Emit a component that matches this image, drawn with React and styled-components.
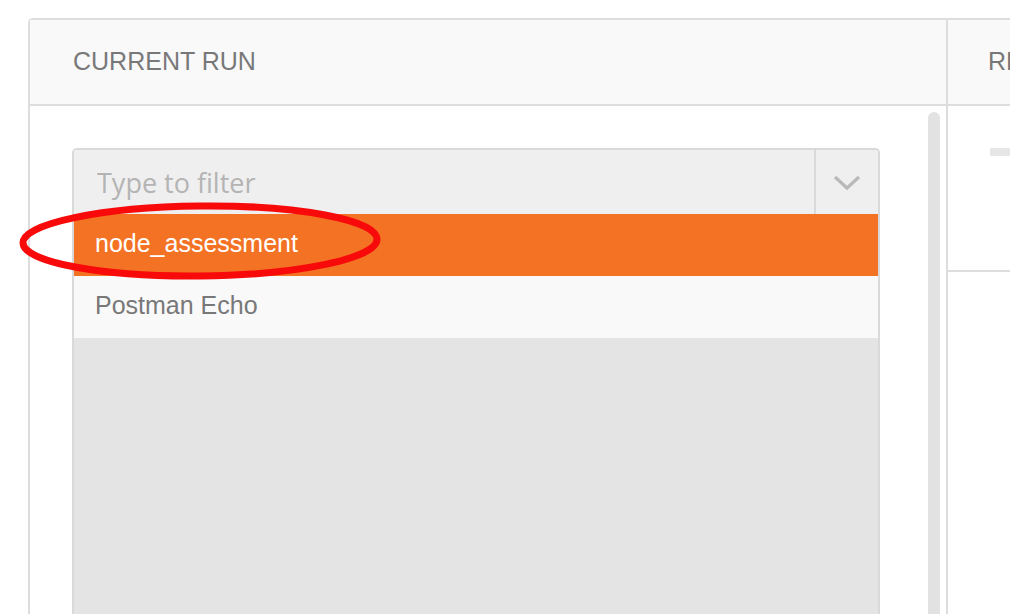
import React from "react";
import styled, { createGlobalStyle } from "styled-components";

const GlobalStyle = createGlobalStyle`
  html, body { margin: 0; padding: 0; background: #ffffff; }
  body { font-family: "Liberation Sans", Arial, sans-serif; overflow: hidden; }
  * { box-sizing: border-box; }
`;

const Page = styled.div`
  position: relative;
  width: 1010px;
  height: 614px;
  overflow: hidden;
  padding: 18px 0 0 28px;
`;

const Board = styled.div`
  display: flex;
  width: 1300px;
  height: 640px;
  border-top: 2px solid #dddddd;
  border-left: 2px solid #dddddd;
  border-top-left-radius: 5px;
`;

const Panel = styled.section`
  display: flex;
  flex-direction: column;
  flex: 0 0 ${(p) => p.$width}px;
  border-right: 2px solid #dddddd;
`;

const PanelHeader = styled.header`
  height: 86px;
  display: flex;
  align-items: center;
  padding-left: ${(p) => p.$indent}px;
  padding-bottom: 2px;
  background: #f9f9f9;
  border-bottom: 2px solid #dddddd;
  font-size: 25px;
  color: #787878;
  white-space: nowrap;
`;

const LeftBody = styled.div`
  flex: 1;
  display: grid;
  grid-template-columns: 808px 1fr;
  padding-left: 42px;
  min-height: 0;
`;

const Dropdown = styled.div`
  margin-top: 42px;
  display: flex;
  flex-direction: column;
  border: 2px solid #d9d9d9;
  border-bottom: none;
  border-radius: 5px 5px 0 0;
  overflow: hidden;
`;

const InputRow = styled.div`
  display: flex;
  height: 64px;
  background: #efefef;
`;

const FilterInput = styled.input`
  flex: 1;
  min-width: 0;
  border: none;
  outline: none;
  background: transparent;
  padding: 0 0 0 23px;
  font-family: "Open Sans", sans-serif;
  font-size: 27px;
  color: #555;
  &::placeholder { color: #b4b4b4; }
`;

const ToggleButton = styled.div`
  flex: 0 0 64px;
  display: flex;
  align-items: center;
  justify-content: center;
  border-left: 2px solid #d9d9d9;
  padding-top: 1px;
`;

const Option = styled.div`
  height: 62px;
  display: flex;
  align-items: center;
  padding: 0 0 3px 21px;
  font-size: 25px;
  background: ${(p) => (p.$active ? "#f37224" : "#f9f9f9")};
  color: ${(p) => (p.$active ? "#ffffff" : "#787878")};
`;

const EmptyArea = styled.div`
  flex: 1;
  background: #e4e4e4;
`;

const ScrollTrack = styled.div`
  justify-self: end;
  width: 12px;
  margin: 6px 6px 0 0;
  background: #e2e2e2;
  border-radius: 6px 6px 0 0;
`;

const RightBody = styled.div`
  display: flex;
  flex-direction: column;
`;

const RunItem = styled.div`
  height: 166px;
  padding: 42px 0 0 42px;
  border-bottom: 2px solid #dddddd;
`;

const SkeletonLine = styled.div`
  width: 120px;
  height: 8px;
  background: #e6e6e6;
`;

const Annotation = styled.svg`
  position: absolute;
  left: 0;
  top: 0;
  pointer-events: none;
`;

function Chevron() {
  return (
    <svg width="28" height="16" viewBox="0 0 28 16">
      <path d="M2 2 L14 13 L26 2" fill="none" stroke="#b9b9b9" strokeWidth="3.2" />
    </svg>
  );
}

export default function App() {
  const options = [
    { name: "node_assessment", active: true },
    { name: "Postman Echo", active: false },
  ];
  return (
    <>
      <GlobalStyle />
      <Page>
        <Board>
          <Panel $width={918}>
            <PanelHeader $indent={43}>CURRENT RUN</PanelHeader>
            <LeftBody>
              <Dropdown>
                <InputRow>
                  <FilterInput placeholder="Type to filter" />
                  <ToggleButton>
                    <Chevron />
                  </ToggleButton>
                </InputRow>
                {options.map((o) => (
                  <Option key={o.name} $active={o.active}>
                    {o.name}
                  </Option>
                ))}
                <EmptyArea />
              </Dropdown>
              <ScrollTrack />
            </LeftBody>
          </Panel>
          <Panel $width={340}>
            <PanelHeader $indent={40}>RECENT RUNS</PanelHeader>
            <RightBody>
              <RunItem>
                <SkeletonLine />
              </RunItem>
            </RightBody>
          </Panel>
        </Board>
        <Annotation width="1010" height="614" viewBox="0 0 1010 614">
          <ellipse
            cx="200"
            cy="241"
            rx="177"
            ry="35"
            fill="none"
            stroke="#f80a0a"
            strokeWidth="7"
            transform="rotate(-0.6 200 241)"
          />
        </Annotation>
      </Page>
    </>
  );
}
